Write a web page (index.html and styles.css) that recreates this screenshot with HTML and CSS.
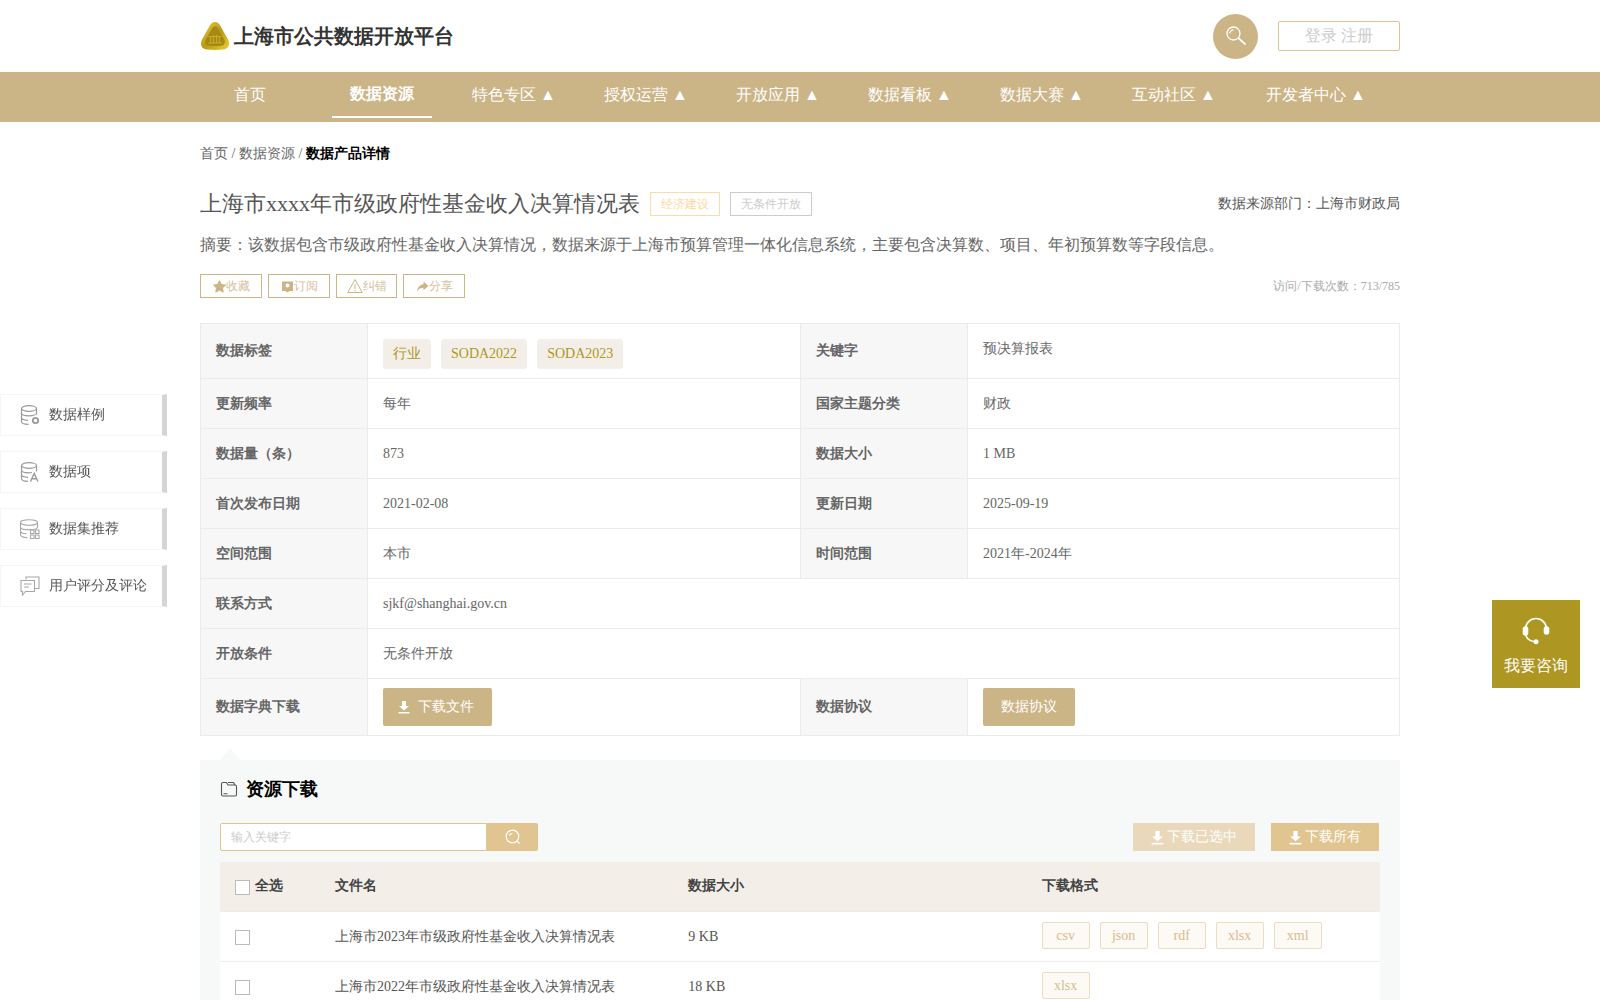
FILE: index.html
```html
<!DOCTYPE html>
<html>

<head>
    <meta charset="UTF-8">
    <meta name="viewport" content="width=device-width, initial-scale=1.0">
    <title>上海市公共数据开放平台</title>
    <link rel="stylesheet" href="styles.css">
</head>

<body>
    <header class="top-bar">
        <div class="container top-inner">
            <div class="brand">
                <svg class="brand-logo" viewBox="0 0 28 28">
                    <defs>
                        <linearGradient id="gold" x1="0" y1="0" x2="1" y2="1">
                            <stop offset="0" stop-color="#f0d040"/>
                            <stop offset="0.5" stop-color="#b89a18"/>
                            <stop offset="1" stop-color="#ecd030"/>
                        </linearGradient>
                    </defs>
                    <path d="M14 1c2.600 0 4 1.800 5.200 4l6.800 12c2.400 4.300 1 9-4 9.700-5 .6-11 .6-16 0-5-.7-6.400-5.400-4-9.700l6.800-12C10 2.800 11.400 1 14 1z" fill="url(#gold)"/>
                    <path d="M14 5c1.300 0 2.200 1 2.900 2.200l5.500 9.800c1.500 2.800.7 5.600-2.500 6-3.900.5-8 .5-11.800 0-3.200-.4-4-3.200-2.500-6l5.500-9.800C11.800 6 12.700 5 14 5z" fill="#a48a14"/>
                    <path d="M8 14.500h12M7.500 20.500h13M10 15v5.500M12.700 13v7.500M15.400 13v7.500M18 15v5.500" stroke="#c9ab28" stroke-width="1" fill="none"/>
                </svg>
                <span class="brand-name">上海市公共数据开放平台</span>
            </div>
            <div class="top-right">
                <div class="search-circle">
                    <svg viewBox="0 0 22 22" width="22" height="22" fill="none" stroke="#fff" stroke-width="1.300">
                        <circle cx="8.500" cy="8.500" r="6.500"/>
                        <path d="M4.800 8.500a3.700 3.700 0 0 1 3.700-3.700"/>
                        <path d="M13.500 13.200l7 6.300" stroke-width="1.800"/>
                    </svg>
                </div>
                <div class="login-box">登录 注册</div>
            </div>
        </div>
    </header>

    <nav class="main-nav">
        <div class="container nav-inner">
            <a class="nav-item">首页</a>
            <a class="nav-item nav-item-on">数据资源</a>
            <a class="nav-item">特色专区 ▲</a>
            <a class="nav-item">授权运营 ▲</a>
            <a class="nav-item">开放应用 ▲</a>
            <a class="nav-item">数据看板 ▲</a>
            <a class="nav-item">数据大赛 ▲</a>
            <a class="nav-item">互动社区 ▲</a>
            <a class="nav-item nav-item-last">开发者中心 ▲</a>
        </div>
    </nav>

    <aside class="side-nav">
        <div class="side-item">
            <svg class="side-icon" viewBox="0 0 20 20" fill="none" stroke="#9a9a9a" stroke-width="1.200">
                <ellipse cx="9" cy="3.500" rx="7.500" ry="2.800"/>
                <path d="M1.500 3.500v13c0 1.600 3 2.800 7 2.800M16.500 3.500v6M1.500 8c0 1.600 3.300 2.800 7.500 2.800s7.500-1.200 7.500-2.800M1.500 12.500c0 1.600 3 2.700 6.500 2.800"/>
                <circle cx="15.500" cy="15.500" r="2.700" stroke-width="1.800"/>
            </svg>
            <span>数据样例</span>
        </div>
        <div class="side-item">
            <svg class="side-icon" viewBox="0 0 20 20" fill="none" stroke="#9a9a9a" stroke-width="1.200">
                <ellipse cx="9" cy="3.500" rx="7.500" ry="2.800"/>
                <path d="M1.500 3.500v13c0 1.600 3 2.800 6.500 2.800M16.500 3.500v6M1.500 8c0 1.600 3.300 2.800 7.500 2.800 1 0 2-.1 3-.3M1.500 12.500c0 1.600 3 2.700 6.500 2.800"/>
                <path d="M10.500 19.500l3.700-8 3.700 8M11.800 16.800h4.800" stroke-width="1.400"/>
            </svg>
            <span>数据项</span>
        </div>
        <div class="side-item">
            <svg class="side-icon" viewBox="0 0 20 20" fill="none" stroke="#a8a8a8" stroke-width="1.100">
                <ellipse cx="9" cy="3.500" rx="8.500" ry="2.800"/>
                <path d="M.5 3.500v12c0 1.800 3 3 7 3.200M17.500 3.500v5.500M.5 8c0 1.600 3.800 2.800 8.500 2.800s8.500-1.200 8.500-2.800M.5 12c0 1.400 2.500 2.500 6 2.700"/>
                <path d="M10.500 11h3.500v3.500h-3.500zM15.500 11h3.500v3.500h-3.500zM10.500 16h3.500v3.500h-3.500zM15.500 16h3.500v3.500h-3.500z"/>
            </svg>
            <span>数据集推荐</span>
        </div>
        <div class="side-item">
            <svg class="side-icon" viewBox="0 0 20 20" fill="none" stroke="#a8a8a8" stroke-width="1.100">
                <path d="M6 3.500V1h13v11.500h-4"/>
                <path d="M1 4.500h13.500v11H5.500L2.500 19v-3.500H1z"/>
                <path d="M4 8h7.500M4 11h5"/>
            </svg>
            <span>用户评分及评论</span>
        </div>
    </aside>

    <div class="consult">
        <svg viewBox="0 0 28 28" width="28" height="28" fill="none" stroke="#fff" stroke-width="1.600">
            <path d="M3.500 12a10.500 10.500 0 0 1 21 0"/>
            <path d="M3.500 15c0 5 3 9 9 9.700"/>
            <rect x="1.500" y="10" width="4" height="8" rx="2" fill="#fff"/>
            <rect x="22.500" y="10" width="4" height="7" rx="2" fill="#fff"/>
            <circle cx="14" cy="24.800" r="1.700" fill="#fff"/>
        </svg>
        <span>我要咨询</span>
    </div>

    <main class="container">
        <div class="breadcrumb">首页 / 数据资源 / <b>数据产品详情</b></div>

        <div class="title-row">
            <h1 class="page-title">上海市xxxx年市级政府性基金收入决算情况表</h1>
            <span class="title-tag tag-orange">经济建设</span>
            <span class="title-tag tag-gray">无条件开放</span>
            <span class="source">数据来源部门：上海市财政局</span>
        </div>

        <p class="summary">摘要：该数据包含市级政府性基金收入决算情况，数据来源于上海市预算管理一体化信息系统，主要包含决算数、项目、年初预算数等字段信息。</p>

        <div class="action-row">
            <a class="action-btn">
                <svg viewBox="0 0 13 13" width="13" height="13"><path d="M6.500.8l1.900 3.700 4.100.6-3 2.900.7 4.100-3.700-1.900-3.700 1.900.7-4.100-3-2.900 4.100-.6z" fill="#cbb486" stroke="#cbb486" stroke-linejoin="round"/></svg>收藏
            </a>
            <a class="action-btn">
                <svg viewBox="0 0 13 13" width="13" height="13"><path d="M1 1.500h11v9.500H8.500L6.500 12.500 4.500 11H1z" fill="#cbb486"/><circle cx="6.500" cy="5.500" r="2" fill="#fff"/></svg>订阅
            </a>
            <a class="action-btn action-btn-narrow">
                <svg viewBox="0 0 16 16" width="16" height="16" fill="none" stroke="#cbb486"><path d="M8 1.500L.8 14.500h14.400z"/><path d="M8 6v5M8 12v1.200"/></svg>纠错
            </a>
            <a class="action-btn">
                <svg viewBox="0 0 13 13" width="13" height="13"><path d="M7.500 1.500l5 4.500-5 4.300V7.800C5 7.800 2.800 8.800 1 11.500c.3-3.800 2.800-6.800 6.500-7.300z" fill="#cbb486"/></svg>分享
            </a>
            <span class="visit-count">访问/下载次数：713/785</span>
        </div>

        <table class="detail-table">
            <colgroup>
                <col class="col-label">
                <col class="col-value">
                <col class="col-label">
                <col>
            </colgroup>
            <tr class="row-tags">
                <th>数据标签</th>
                <td>
                    <div class="chip-row">
                        <span class="chip">行业</span>
                        <span class="chip">SODA2022</span>
                        <span class="chip">SODA2023</span>
                    </div>
                </td>
                <th>关键字</th>
                <td class="cell-raised">预决算报表</td>
            </tr>
            <tr>
                <th>更新频率</th>
                <td>每年</td>
                <th>国家主题分类</th>
                <td>财政</td>
            </tr>
            <tr>
                <th>数据量（条）</th>
                <td>873</td>
                <th>数据大小</th>
                <td>1 MB</td>
            </tr>
            <tr>
                <th>首次发布日期</th>
                <td>2021-02-08</td>
                <th>更新日期</th>
                <td>2025-09-19</td>
            </tr>
            <tr>
                <th>空间范围</th>
                <td>本市</td>
                <th>时间范围</th>
                <td>2021年-2024年</td>
            </tr>
            <tr>
                <th>联系方式</th>
                <td colspan="3">sjkf@shanghai.gov.cn</td>
            </tr>
            <tr>
                <th>开放条件</th>
                <td colspan="3">无条件开放</td>
            </tr>
            <tr class="row-buttons">
                <th>数据字典下载</th>
                <td>
                    <a class="gold-btn">
                        <svg viewBox="0 0 12 14" width="12" height="14" fill="#fff"><path d="M4 1h4v5h3L6 10.500 1 6h3z"/><rect x="0.500" y="12" width="11" height="1.500"/></svg>下载文件
                    </a>
                </td>
                <th>数据协议</th>
                <td><a class="gold-btn">数据协议</a></td>
            </tr>
        </table>

        <section class="resource">
            <div class="resource-arrow"></div>
            <h2 class="resource-title">
                <svg viewBox="0 0 18 18" width="18" height="18" fill="none" stroke="#555" stroke-width="1.100">
                    <path d="M1.500 14.500V4a1.500 1.500 0 0 1 1.500-1.500h3.500l1.500 2.500h7A1.500 1.500 0 0 1 16.500 6.500v8a1.500 1.500 0 0 1-1.500 1.500H3a1.500 1.500 0 0 1-1.500-1.500z"/>
                    <path d="M8 2.500h5.500L15 5M3.500 13.800h4"/>
                </svg>
                资源下载
            </h2>

            <div class="tool-row">
                <div class="search-box">
                    <span class="search-input">输入关键字</span>
                    <span class="search-btn">
                        <svg viewBox="0 0 16 16" width="16" height="16" fill="none" stroke="#fff" stroke-width="1.200">
                            <circle cx="7.500" cy="7.500" r="6.300"/>
                            <path d="M4.500 6.500a3.200 3.200 0 0 1 3-2M12 12l2.500 2.500"/>
                        </svg>
                    </span>
                </div>
                <div class="tool-buttons">
                    <a class="tool-btn tool-btn-light">
                        <svg viewBox="0 0 12 14" width="13" height="15" fill="#fff"><path d="M4 1h4v5h3L6 10.500 1 6h3z"/><rect x="0.500" y="12" width="11" height="1.500"/></svg>下载已选中
                    </a>
                    <a class="tool-btn">
                        <svg viewBox="0 0 12 14" width="13" height="15" fill="#fff"><path d="M4 1h4v5h3L6 10.500 1 6h3z"/><rect x="0.500" y="12" width="11" height="1.500"/></svg>下载所有
                    </a>
                </div>
            </div>

            <table class="file-table">
                <colgroup>
                    <col class="col-check">
                    <col class="col-file">
                    <col class="col-file">
                    <col class="col-file">
                </colgroup>
                <tr class="file-head">
                    <th><span class="checkbox"></span>全选</th>
                    <th>文件名</th>
                    <th>数据大小</th>
                    <th>下载格式</th>
                </tr>
                <tr>
                    <td><span class="checkbox"></span></td>
                    <td>上海市2023年市级政府性基金收入决算情况表</td>
                    <td>9 KB</td>
                    <td>
                        <div class="format-row">
                            <span class="format">csv</span>
                            <span class="format">json</span>
                            <span class="format">rdf</span>
                            <span class="format">xlsx</span>
                            <span class="format">xml</span>
                        </div>
                    </td>
                </tr>
                <tr>
                    <td><span class="checkbox"></span></td>
                    <td>上海市2022年市级政府性基金收入决算情况表</td>
                    <td>18 KB</td>
                    <td>
                        <div class="format-row">
                            <span class="format">xlsx</span>
                        </div>
                    </td>
                </tr>
            </table>
        </section>
    </main>
</body>

</html>
```

FILE: styles.css
```css
body {
    margin: 0;
    font-family: "Liberation Serif", serif;
    font-size: 14px;
    color: #666;
    background-color: white;
}

.container {
    width: 1200px;
    margin: 0 auto;
}

.top-bar {
    height: 72px;
}

.top-inner {
    display: flex;
    align-items: center;
    justify-content: space-between;
    height: 72px;
}

.brand {
    display: flex;
    align-items: center;
}

.brand-logo {
    width: 30px;
    height: 30px;
    margin-right: 4px;
}

.brand-name {
    font-size: 20px;
    font-weight: bold;
    color: #333;
}

.top-right {
    display: flex;
    align-items: center;
    gap: 20px;
}

.search-circle {
    display: flex;
    align-items: center;
    justify-content: center;
    width: 45px;
    height: 45px;
    border-radius: 50%;
    background-color: #cbb486;
}

.login-box {
    box-sizing: border-box;
    width: 122px;
    height: 30px;
    line-height: 28px;
    border: 1px solid #e0c591;
    border-radius: 2px;
    text-align: center;
    font-size: 16px;
    color: #ccc;
}

.main-nav {
    height: 50px;
    background-color: #cbb486;
}

.nav-inner {
    display: flex;
    gap: 32px;
}

.nav-item {
    box-sizing: border-box;
    width: 100px;
    height: 46px;
    line-height: 46px;
    text-align: center;
    white-space: nowrap;
    font-size: 16px;
    color: white;
}

.nav-item-on {
    line-height: 44px;
    border-bottom: 2px solid white;
    font-weight: bold;
}

.nav-item-last {
    width: 120px;
}

.side-nav {
    position: fixed;
    left: 0;
    top: 394px;
    display: flex;
    flex-direction: column;
    gap: 15px;
}

.side-item {
    box-sizing: border-box;
    display: flex;
    align-items: center;
    width: 167px;
    height: 42px;
    padding-left: 19px;
    border: 1px solid #f5f5f5;
    border-right: 5px solid #d5d5d5;
    color: #555;
}

.side-icon {
    width: 20px;
    height: 20px;
    margin-right: 9px;
}

.consult {
    position: fixed;
    left: 1492px;
    top: 600px;
    display: flex;
    flex-direction: column;
    align-items: center;
    gap: 11px;
    box-sizing: border-box;
    width: 88px;
    height: 88px;
    padding-top: 17px;
    background-color: #ae9623;
    font-size: 16px;
    color: white;
}

.breadcrumb {
    padding-top: 22px;
    line-height: 20px;
}

.breadcrumb b {
    color: black;
}

.title-row {
    display: flex;
    align-items: center;
    height: 30px;
    margin-top: 25px;
}

.page-title {
    margin: 0 10px 0 0;
    font-size: 22px;
    font-weight: normal;
    color: #555;
}

.title-tag {
    box-sizing: border-box;
    height: 24px;
    line-height: 22px;
    margin-right: 10px;
    padding: 0 10px;
    border: 1px solid #ccc;
    font-size: 12px;
    color: #ccc;
}

.tag-orange {
    border-color: #fbdca8;
    color: #fbd9a0;
}

.source {
    margin-left: auto;
    color: #555;
}

.summary {
    margin: 14px 0 0 0;
    line-height: 24px;
    font-size: 16px;
    color: #666;
}

.action-row {
    display: flex;
    align-items: center;
    gap: 6px;
    margin-top: 17px;
}

.action-btn {
    display: flex;
    align-items: center;
    justify-content: center;
    box-sizing: border-box;
    width: 62px;
    height: 24px;
    border: 1px solid #cbb486;
    font-size: 12px;
    color: #d6c199;
}

.action-btn-narrow {
    width: 61px;
}

.visit-count {
    margin-left: auto;
    font-size: 12px;
    color: #aaa;
}

.detail-table {
    width: 1200px;
    margin-top: 25px;
    border-collapse: collapse;
    table-layout: fixed;
}

.col-label {
    width: 167px;
}

.col-value {
    width: 433px;
}

.detail-table th,
.detail-table td {
    height: 50px;
    padding: 0 15px;
    border: 1px solid #ebebeb;
    box-sizing: border-box;
    text-align: left;
}

.detail-table th {
    background-color: #f7f7f7;
    color: #666;
}

.row-tags th,
.row-tags td {
    height: 55px;
}

.row-buttons th,
.row-buttons td {
    height: 57px;
}

.cell-raised {
    padding-bottom: 5px !important;
}

.chip-row {
    display: flex;
    gap: 10px;
    margin-top: 5px;
}

.chip {
    height: 30px;
    line-height: 30px;
    padding: 0 10px;
    border-radius: 3px;
    background-color: #f3efe8;
    color: #ae9623;
}

.gold-btn {
    display: inline-flex;
    align-items: center;
    gap: 8px;
    height: 38px;
    padding: 0 18px 0 15px;
    border-radius: 2px;
    background-color: #cbb486;
    color: white;
    vertical-align: middle;
}

.row-buttons td:last-child .gold-btn {
    padding: 0 18px;
}

.resource {
    position: relative;
    margin-top: 24px;
    padding: 17px 20px 20px 20px;
    background-color: #f7f9f8;
}

.resource-arrow {
    position: absolute;
    left: 20px;
    top: -12px;
    width: 0;
    height: 0;
    border-left: 10px solid transparent;
    border-right: 10px solid transparent;
    border-bottom: 12px solid #f7f9f8;
}

.resource-title {
    display: flex;
    align-items: center;
    gap: 8px;
    margin: 0;
    line-height: 24px;
    font-size: 18px;
    color: black;
}

.tool-row {
    display: flex;
    align-items: center;
    justify-content: space-between;
    margin-top: 22px;
}

.search-box {
    display: flex;
    height: 28px;
}

.search-input {
    box-sizing: border-box;
    width: 267px;
    height: 28px;
    line-height: 26px;
    padding-left: 10px;
    border: 1px solid #e0c591;
    border-radius: 2px 0 0 2px;
    background-color: white;
    font-size: 12px;
    color: #ccc;
}

.search-btn {
    display: flex;
    align-items: center;
    justify-content: center;
    width: 51px;
    height: 28px;
    border-radius: 0 2px 2px 0;
    background-color: #e0c591;
}

.tool-buttons {
    display: flex;
    gap: 16px;
    margin-right: 1px;
}

.tool-btn {
    display: flex;
    align-items: center;
    gap: 3px;
    height: 28px;
    padding: 0 18px;
    background-color: #e0c591;
    color: white;
}

.tool-btn-light {
    background-color: #e9d8ba;
}

.file-table {
    width: 1160px;
    margin-top: 11px;
    border-collapse: collapse;
    table-layout: fixed;
    background-color: white;
}

.col-check {
    width: 100px;
}

.file-table th,
.file-table td {
    height: 50px;
    padding: 2px 15px 0 15px;
    border-bottom: 1px solid #f0ece5;
    box-sizing: border-box;
    text-align: left;
    color: #555;
}

.file-table .file-head th {
    height: 49px;
    padding-top: 0;
    background-color: #f3efe8;
    color: #444;
}

.checkbox {
    display: inline-block;
    box-sizing: border-box;
    width: 15px;
    height: 15px;
    margin-right: 5px;
    border: 1px solid #bbb;
    background-color: white;
    vertical-align: middle;
}

.format-row {
    display: flex;
    gap: 10px;
    margin-top: -3px;
}

.format {
    box-sizing: border-box;
    width: 48px;
    height: 27px;
    line-height: 25px;
    border: 1px solid #ecdcc0;
    border-radius: 2px;
    background-color: #fdf9f5;
    text-align: center;
    color: #d9bc8e;
}
```
